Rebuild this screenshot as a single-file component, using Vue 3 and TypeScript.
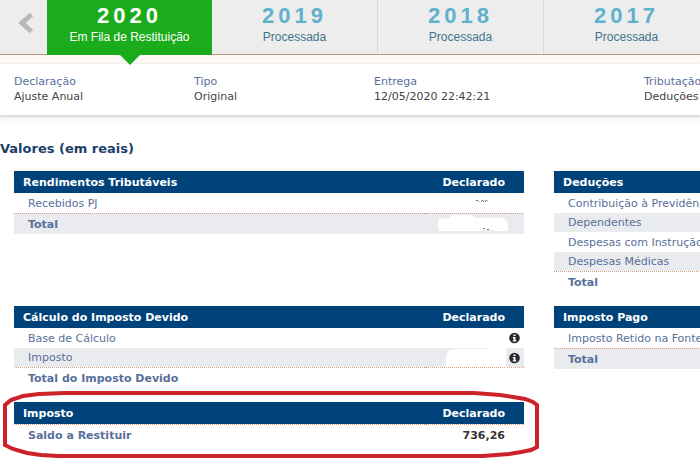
<script setup lang="ts">
interface Row {
  label: string
  value?: string
  info?: boolean
  total?: boolean
  mask?: 'received' | 'total' | 'tax'
}
interface Section {
  id: string
  title: string
  column?: string
  highlighted?: boolean
  rows: Row[]
}

const years = [
  { year: '2020', status: 'Em Fila de Restituição', active: true },
  { year: '2019', status: 'Processada', active: false },
  { year: '2018', status: 'Processada', active: false },
  { year: '2017', status: 'Processada', active: false },
]

const details = [
  { label: 'Declaração', value: 'Ajuste Anual' },
  { label: 'Tipo', value: 'Original' },
  { label: 'Entrega', value: '12/05/2020 22:42:21' },
  { label: 'Tributação', value: 'Deduções' },
]

const sections: Section[] = [
  {
    id: 'rendimentos',
    title: 'Rendimentos Tributáveis',
    column: 'Declarado',
    rows: [
      { label: 'Recebidos PJ', mask: 'received' },
      { label: 'Total', total: true, mask: 'total' },
    ],
  },
  {
    id: 'deducoes',
    title: 'Deduções',
    rows: [
      { label: 'Contribuição à Previdência' },
      { label: 'Dependentes' },
      { label: 'Despesas com Instrução' },
      { label: 'Despesas Médicas' },
      { label: 'Total', total: true },
    ],
  },
  {
    id: 'calculo',
    title: 'Cálculo do Imposto Devido',
    column: 'Declarado',
    rows: [
      { label: 'Base de Cálculo', info: true },
      { label: 'Imposto', info: true, mask: 'tax' },
      { label: 'Total do Imposto Devido', total: true },
    ],
  },
  {
    id: 'pago',
    title: 'Imposto Pago',
    rows: [{ label: 'Imposto Retido na Fonte' }, { label: 'Total', total: true }],
  },
  {
    id: 'imposto',
    title: 'Imposto',
    column: 'Declarado',
    highlighted: true,
    rows: [{ label: 'Saldo a Restituir', value: '736,26', total: true }],
  },
]
</script>

<template>
  <main class="page">
    <nav class="years">
      <button class="prev" type="button" aria-label="Anterior">
        <svg width="16" height="22" viewBox="0 0 16 22">
          <path d="M13.5 2.5 L4 11 L13.5 19.5" fill="none" stroke="#b9b9b9" stroke-width="5" />
        </svg>
      </button>
      <a v-for="y in years" :key="y.year" href="#" class="tab" :class="{ active: y.active }">
        <span class="year">{{ y.year }}</span>
        <span class="status">{{ y.status }}</span>
      </a>
    </nav>

    <dl class="details">
      <div v-for="d in details" :key="d.label">
        <dt>{{ d.label }}</dt>
        <dd>{{ d.value }}</dd>
      </div>
    </dl>

    <h1>Valores (em reais)</h1>

    <div class="sections">
      <section v-for="s in sections" :key="s.id">
        <table>
          <thead>
            <tr>
              <th class="name" scope="col">{{ s.title }}</th>
              <th class="amount" scope="col">{{ s.column }}</th>
              <td class="extra"></td>
            </tr>
          </thead>
          <tbody>
            <tr v-for="r in s.rows" :key="r.label" :class="{ total: r.total }">
              <th class="name" scope="row">{{ r.label }}</th>
              <td class="amount">
                {{ r.value }}
                <svg v-if="r.mask === 'received'" class="mask" width="72" height="20" viewBox="0 0 72 20">
                  <path d="M43 7.500h1.500l1 1M48 8.500q1.500-2 3 0M52 8.500q1.500-2 2.500-.5" fill="none" stroke="#555" />
                </svg>
                <svg v-else-if="r.mask === 'total'" class="mask" width="72" height="20" viewBox="0 0 72 20">
                  <path d="M6 5 L17 4 Q18 1 22 1 H38 L43 4 L70 4 Q76 6 75 17 H64 Q56 14 47 17 H6 Q4 11 6 5Z" fill="#fff" />
                  <path d="M50 14.500h2M54 15.500h2" stroke="#777" />
                </svg>
                <svg v-else-if="r.mask === 'tax'" class="mask" width="72" height="22" viewBox="0 0 72 22">
                  <path d="M13 22 V8 Q14 1 23 1 H53 L58 0 H73 V22Z" fill="#fff" />
                </svg>
              </td>
              <td class="extra">
                <svg v-if="r.info" width="11" height="12" viewBox="0 0 11 12">
                  <circle cx="5.500" cy="6" r="5.300" fill="#262a2e" />
                  <path d="M4.500 2.500h2v1.500h-2zM3.800 5h2.700v3.200h.8v1.200H3.800V8.200h.8v-2h-.8z" fill="#fff" />
                </svg>
              </td>
            </tr>
          </tbody>
        </table>
        <svg v-if="s.highlighted" class="marker" viewBox="0 0 540 72" preserveAspectRatio="none">
          <path
            d="M64 5 H473 L486 6 L499 7 L512 9 L524 11 L532 14 L536 17 V59 L530 62 L520 64 L508 66 L482 68 H57 L40 67 L26 65 L12 61 L4 57 V17 L10 12 L22 8 L38 6 Z"
            class="stroke"
          />
        </svg>
      </section>
    </div>
  </main>
</template>

<style>
body {
  margin: 0;
  background: #fff;
}
</style>

<style scoped>
.page {
  overflow: hidden;
  padding-bottom: 20px;
  font-family: Verdana, "DejaVu Sans", sans-serif;
  font-size: 11px;
  line-height: 15px;
}
.years {
  display: flex;
  height: 54px;
  background: #ededed;
  border-bottom: 1px solid #b89c86;
}
.prev {
  flex: 0 0 47px;
  padding: 0 0 8px 4px;
  border: 0;
  background: none;
}
.prev svg {
  vertical-align: middle;
}
.tab {
  position: relative;
  flex: 1 0 165px;
  display: flex;
  flex-direction: column;
  align-items: center;
  padding-top: 4px;
  font-family: "Liberation Sans", Arial, sans-serif;
  color: #3d758b;
  text-decoration: none;
}
.tab + .tab + .tab {
  border-left: 1px solid #d9d9d9;
}
.year {
  font-size: 22px;
  font-weight: bold;
  line-height: 24px;
  letter-spacing: 4px;
  color: #5fb1cc;
}
.status {
  font-size: 12px;
  line-height: 18px;
}
.active {
  height: 51px;
  background: #1bac1b;
  color: #fff;
}
.active .year {
  color: #fff;
}
.active::after {
  content: "";
  position: absolute;
  top: 100%;
  left: 50%;
  margin-left: -10px;
  border: 10px solid transparent;
  border-top-color: #1bac1b;
  border-bottom: 0;
}
.details {
  display: grid;
  grid-template-columns: 180fr 180fr 270fr minmax(0, 56fr);
  height: 51px;
  box-sizing: border-box;
  margin: 9px 0 26px;
  padding: 10px 0 0 14px;
  background: #fff;
  box-shadow: 0 0 2px #ddd, 0 2px 2px #d8d8d8, 0 0 0 9px #fcf8f5;
  white-space: nowrap;
}
dt {
  color: #59709a;
}
dd {
  margin: 0;
  color: #444;
}
h1 {
  margin: 0 0 14px;
  font-size: 13px;
  line-height: 16px;
  color: #1c4068;
}
.sections {
  display: grid;
  grid-template-columns: repeat(2, minmax(510px, 1fr));
  gap: 14px 30px;
  padding-left: 14px;
}
section {
  position: relative;
}
table {
  width: 100%;
  border-spacing: 0;
}
th,
td {
  height: 19px;
  box-sizing: border-box;
  padding: 0;
}
tbody tr:nth-child(odd) > * {
  height: 20px;
}
thead tr > * {
  height: 22px;
  background: #00437a;
  color: #fff;
}
.name {
  padding-left: 14px;
  font-weight: normal;
  text-align: left;
  color: #59709a;
}
thead .name {
  padding-left: 9px;
  font-weight: bold;
  color: #fff;
}
.amount {
  position: relative;
  width: 80px;
  text-align: right;
}
.extra {
  width: 19px;
  text-align: center;
}
.extra svg {
  display: block;
  margin: 0 4px;
}
tbody tr:nth-child(even) > * {
  background: #e9ebee;
}
tbody tr.total > * {
  height: 21px;
  border-top: 1px dotted #d9a184;
  font-weight: bold;
}
.total .amount {
  color: #333;
}
.mask {
  position: absolute;
  top: 0;
  right: 0;
  overflow: visible;
}
.marker {
  position: absolute;
  top: -14px;
  left: -13px;
  width: calc(100% + 30px);
  height: 72px;
  pointer-events: none;
}
.stroke {
  fill: none;
  stroke: #cc2229;
  stroke-width: 4;
}
</style>
